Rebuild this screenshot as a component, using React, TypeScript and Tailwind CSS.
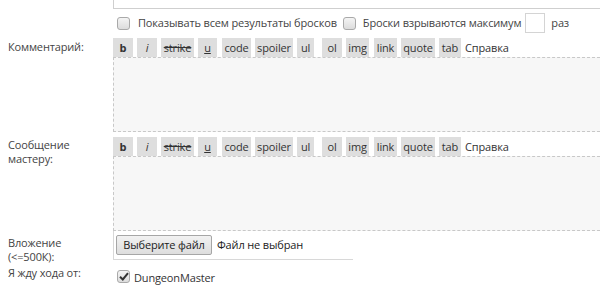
import React from "react";

type Tool = { label: string; cls: string; text?: string };

const tools: Tool[] = [
  { label: "b", cls: "w-[20px]", text: "font-bold" },
  { label: "i", cls: "w-[20px] ml-[4px]", text: "italic" },
  { label: "strike", cls: "w-[33px] ml-[4px]", text: "line-through" },
  { label: "u", cls: "w-[19px] ml-[4px]", text: "underline" },
  { label: "code", cls: "w-[29px] ml-[5px]" },
  { label: "spoiler", cls: "w-[38px] ml-[4px]" },
  { label: "ul", cls: "w-[17px] ml-[4px]" },
  { label: "ol", cls: "w-[20px] ml-[8px]" },
  { label: "img", cls: "w-[23px] ml-[4px]" },
  { label: "link", cls: "w-[23px] ml-[5px]" },
  { label: "quote", cls: "w-[34px] ml-[4px]" },
  { label: "tab", cls: "w-[22px] ml-[4px]" },
];

function Check({ checked }: { checked?: boolean }) {
  return (
    <span className="flex h-[13px] w-[13px] shrink-0 items-center justify-center rounded-[3px] border border-[#a9a9a9] bg-gradient-to-b from-[#f4f4f4] to-[#dcdcdc]">
      {checked && (
        <svg width="10" height="9" viewBox="0 0 10 9">
          <path d="M1 4.8 L3.8 7.5 L9 1.2" fill="none" stroke="#333" strokeWidth="2" />
        </svg>
      )}
    </span>
  );
}

function Editor() {
  return (
    <div className="flex flex-col">
      <div className="flex h-[19px] items-stretch">
        {tools.map((t) => (
          <span
            key={t.label}
            className={`flex items-center justify-center bg-[#dedede] text-[#333] ${t.cls}`}
          >
            <span className={t.text}>{t.label}</span>
          </span>
        ))}
        <span className="ml-[4px] flex items-center text-[#333]">Справка</span>
      </div>
      <div className="h-[75px] border border-r-0 border-dashed border-[#c8c8c8] bg-[#f7f7f7]" />
    </div>
  );
}

export default function App() {
  return (
    <div className="h-[287px] w-[600px] overflow-hidden bg-white font-['Open_Sans',sans-serif] text-[11px] leading-[14px] tracking-[-0.15px] text-[#444]">
      <div className="grid grid-cols-[113px_1fr]">
        <div />
        <div className="h-[9px] border-b border-l border-[#cfcfcf]" />

        <div />
        <div className="mt-[3px] flex h-[22px] items-center pl-[4px] text-[#444]">
          <Check />
          <span className="ml-[8px]">Показывать всем результаты бросков</span>
          <span className="ml-[6px]">
            <Check />
          </span>
          <span className="ml-[7px]">Броски взрываются максимум</span>
          <span className="ml-[4px] h-[20px] w-[20px] border border-[#d4d4d4] bg-white" />
          <span className="ml-[6px]">раз</span>
        </div>

        <div className="mt-[4px] pl-[8px] pt-[2px]">Комментарий:</div>
        <div className="mt-[4px]">
          <Editor />
        </div>

        <div className="mt-[5px] pl-[8px] pt-[1px]">
          Сообщение
          <br />
          мастеру:
        </div>
        <div className="mt-[5px]">
          <Editor />
        </div>

        <div className="pl-[8px] pt-[5px]">
          Вложение
          <br />
          (&lt;=500К):
        </div>
        <div className="flex h-[29px] w-[240px] items-center self-start border-b border-l border-[#d8d8d8] pl-[2px]">
          <span className="flex h-[20px] w-[96px] items-center justify-center rounded-[2px] border border-[#a6a6a6] bg-gradient-to-b from-[#f2f2f2] to-[#dddddd] text-[#222]">
            Выберите файл
          </span>
          <span className="ml-[5px] text-[#222]">Файл не выбран</span>
        </div>

        <div className="pl-[8px] pt-[2px]">Я жду хода от:</div>
        <div className="mt-[4px] flex items-center pl-[4px]">
          <Check checked />
          <span className="ml-[4px] mt-[3px] text-[#333]">DungeonMaster</span>
        </div>
      </div>
    </div>
  );
}
